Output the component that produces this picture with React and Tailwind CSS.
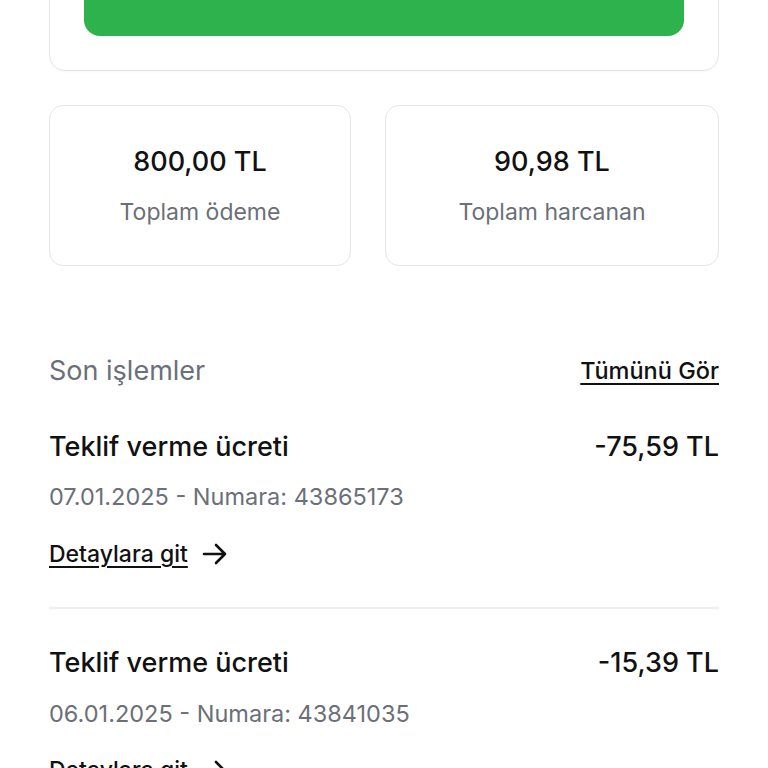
import React from "react";

function Arrow() {
  return (
    <svg width="26" height="22" viewBox="0 0 26 22" fill="none" stroke="#111" strokeWidth="2.6" strokeLinecap="round" strokeLinejoin="round">
      <path d="M2 11h21M14 2l9 9-9 9" />
    </svg>
  );
}

function Tx({ title, amount, date, num }) {
  return (
    <div className="flex flex-col">
      <div className="flex items-center justify-between h-[40px]">
        <span className="text-[27px] font-medium text-[#111]">{title}</span>
        <span className="text-[27px] font-medium text-[#111]">{amount}</span>
      </div>
      <div className="h-[30px] mt-[15px] flex items-center text-[23.5px] text-[#6b7078]">
        {date} - Numara: {num}
      </div>
      <div className="h-[30px] mt-[27px] flex items-center gap-[14px]">
        <span className="text-[23px] font-medium text-[#111] underline underline-offset-4 decoration-[1.5px]">Detaylara git</span>
        <Arrow />
      </div>
    </div>
  );
}

export default function App() {
  return (
    <div className="w-[768px] h-[768px] overflow-hidden bg-white px-[49px]" style={{ fontFamily: "Inter, 'Noto Sans', sans-serif" }}>
      <div className="-mt-[58px] border-[1.5px] border-[#e6e6e6] rounded-[16px] px-[34px] pt-[18px] pb-[34px] shadow-[0_1px_2px_rgba(0,0,0,0.04)]">
        <div className="h-[75px] bg-[#2eb24e] rounded-[16px]" />
      </div>
      <div className="mt-[34px] flex gap-[34px]">
        <div className="w-[302px] h-[161px] border-[1.5px] border-[#e6e6e6] rounded-[14px] flex flex-col items-center justify-center">
          <span className="text-[27px] font-medium text-[#111] leading-none">800,00 TL</span>
          <span className="text-[23px] text-[#6b7078] mt-[26px] leading-none">Toplam ödeme</span>
        </div>
        <div className="flex-1 h-[161px] border-[1.5px] border-[#e6e6e6] rounded-[14px] flex flex-col items-center justify-center">
          <span className="text-[27px] font-medium text-[#111] leading-none">90,98 TL</span>
          <span className="text-[23px] text-[#6b7078] mt-[26px] leading-none">Toplam harcanan</span>
        </div>
      </div>
      <div className="mt-[85px] flex items-center justify-between h-[40px]">
        <span className="text-[27px] text-[#6b7078]">Son işlemler</span>
        <span className="text-[23.5px] font-medium text-[#111] underline underline-offset-4 decoration-[1.5px]">Tümünü Gör</span>
      </div>
      <div className="mt-[36px]">
        <Tx title="Teklif verme ücreti" amount="-75,59 TL" date="07.01.2025" num="43865173" />
      </div>
      <div className="mt-[38px] h-[1.5px] bg-[#eeeeee]" />
      <div className="mt-[35px]">
        <Tx title="Teklif verme ücreti" amount="-15,39 TL" date="06.01.2025" num="43841035" />
      </div>
    </div>
  );
}
